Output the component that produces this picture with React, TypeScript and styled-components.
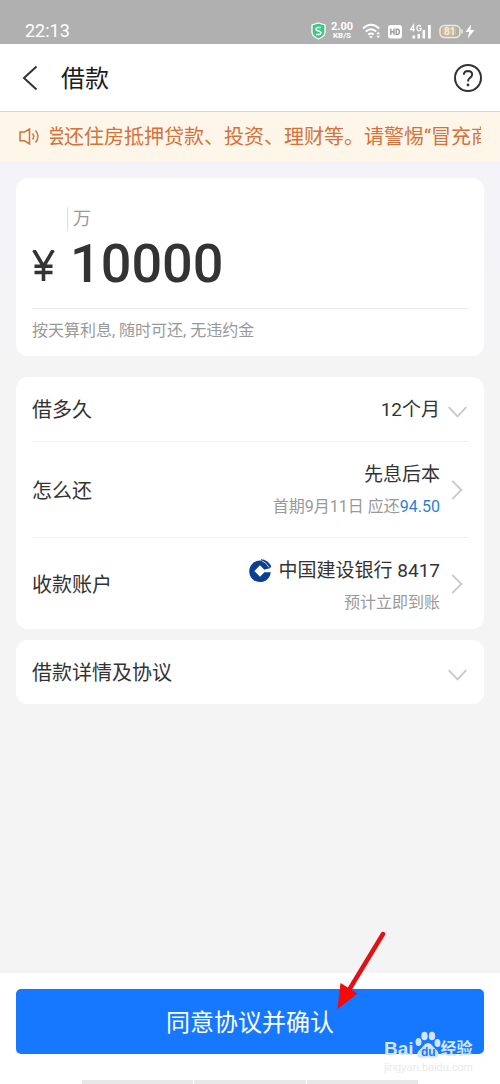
import React from "react";
import styled, { createGlobalStyle } from "styled-components";

const GlobalStyle = createGlobalStyle`
  *, *::before, *::after { box-sizing: border-box; }
  body {
    margin: 0;
    background: #f4f4f4;
    color: #333;
    font-family: Roboto, "Noto Sans CJK SC", sans-serif;
  }
  button { font: inherit; color: inherit; border: 0; background: none; padding: 0; cursor: pointer; }
  h1, p { margin: 0; font-weight: 400; }
  svg { display: block; flex: none; }
`;

const Page = styled.div`
  min-height: 100vh;
  display: flex;
  flex-direction: column;
  background: linear-gradient(#f3f3f9 160px, #f4f4f4 400px);
`;

const StatusBar = styled.div`
  height: 44px;
  padding: 18px 24px 0 25px;
  display: flex;
  justify-content: space-between;
  align-items: center;
  background: #b0b0b0;
  color: #fff;
`;

const Clock = styled.time`
  font-size: 18px;
  line-height: 26px;
`;

const StatusIcons = styled.div`
  display: flex;
  align-items: center;
`;

const NetSpeed = styled.div`
  width: 24px;
  margin: 0 8px 0 4px;
  display: flex;
  flex-direction: column;
  align-items: center;
  font-weight: 700;
  font-size: 11px;
  line-height: 10px;
`;

const NetUnit = styled.span`
  font-size: 8px;
  line-height: 8px;
`;

const Header = styled.header`
  height: 68px;
  padding: 0 17px 0 20px;
  display: flex;
  align-items: center;
  gap: 20px;
  background: #fff;
  border-bottom: 1px solid #d4d4d4;
`;

const Title = styled.h1`
  flex: 1;
  padding-top: 2px;
  font-size: 24px;
  line-height: 36px;
  color: #1c1c1c;
`;

const IconButton = styled.button`
  display: flex;
  color: #333;
`;

const Notice = styled.div`
  height: 49px;
  padding: 0 19px 0 18px;
  display: flex;
  align-items: center;
  gap: 8px;
  background: #fef7e9;
  color: #d4713c;
`;

const Marquee = styled.p<{ $scrolled: number }>`
  flex: 1;
  overflow: hidden;
  white-space: nowrap;
  text-indent: -${(p) => p.$scrolled}px;
  font-size: 20px;
  line-height: 32px;
`;

const Main = styled.main`
  flex: 1;
  padding: 17px 16px 24px;
`;

const Card = styled.section<{ $gap?: number }>`
  padding: 0 16px;
  margin-bottom: ${(p) => p.$gap ?? 0}px;
  background: #fff;
  border-radius: 12px;
`;

const UnitMark = styled.div`
  padding: 29px 0 0 35px;
  display: flex;
`;

const Unit = styled.span`
  padding-left: 5px;
  border-left: 1px solid #ddd;
  font-size: 18px;
  line-height: 24px;
  color: #999;
`;

const Amount = styled.div`
  height: 78px;
  padding-bottom: 8px;
  display: flex;
  align-items: center;
  gap: 15px;
  border-bottom: 1px solid #ebebeb;
`;

const AmountText = styled.span`
  padding-bottom: 4px;
  font-size: 54px;
  line-height: 64px;
  font-weight: 500;
`;

const Hint = styled.p`
  padding: 10px 0 13px;
  font-size: 16px;
  line-height: 24px;
  color: #999;
`;

const Row = styled.button<{ $height: number }>`
  width: 100%;
  min-height: ${(p) => p.$height}px;
  display: flex;
  align-items: center;
  text-align: right;

  & + & { border-top: 1px solid #f0f0f0; }
`;

const RowLabel = styled.span`
  flex: 1;
  padding-top: 2px;
  text-align: left;
  font-size: 20px;
  line-height: 30px;
`;

const RowValue = styled.span<{ $top?: number }>`
  padding-top: ${(p) => p.$top ?? 2}px;
  margin-right: 8px;
  display: flex;
  flex-direction: column;
  align-items: flex-end;
  gap: 4px;
`;

const Primary = styled.span`
  display: flex;
  align-items: center;
  gap: 7px;
  font-size: 19px;
  line-height: 28px;
`;

const Secondary = styled.span`
  font-size: 16px;
  line-height: 28px;
  color: #999;
`;

const Due = styled.span`
  color: #2e7fd0;
`;

const ChevronBox = styled.span<{ $down?: boolean }>`
  width: 20px;
  padding: ${(p) => (p.$down ? "6px 0 0" : "0 0 0 3px")};
`;

const Footer = styled.footer`
  position: relative;
  padding: 16px 16px 0;
  background: #fff;
`;

const Confirm = styled.button`
  display: block;
  width: 100%;
  height: 65px;
  padding-top: 2px;
  border-radius: 5px;
  background: #1677ff;
  color: #fff;
  font-size: 24px;
  line-height: 36px;
`;

const TabStrip = styled.div`
  width: 72%;
  margin: 26px auto 0;
  display: flex;
  gap: 1px;
`;

const TabEdge = styled.span`
  flex: 1;
  height: 4px;
  background: #e8e8e8;
`;

const Pointer = styled.svg`
  position: absolute;
  right: 112px;
  bottom: 72px;
  pointer-events: none;
`;

const Watermark = styled.div`
  position: absolute;
  right: 27px;
  bottom: 9px;
  width: 89px;
  pointer-events: none;
`;

const WatermarkLogo = styled.div`
  display: flex;
  align-items: flex-end;
  color: #d3e4ff;
  font-family: "Liberation Sans", "Noto Sans CJK SC", sans-serif;
  font-weight: 700;
  font-size: 19px;
  line-height: 20px;
`;

const WatermarkName = styled.span`
  font-size: 16px;
`;

const WatermarkUrl = styled.div`
  font-family: "Liberation Sans", sans-serif;
  font-size: 11px;
  line-height: 16px;
  color: #e9e9e9;
`;

function Chevron({ down }: { down?: boolean }) {
  return (
    <ChevronBox $down={down}>
      {down ? (
        <svg width="19" height="12" viewBox="0 0 19 12" fill="none" stroke="#c8c8c8" strokeWidth="1.8">
          <path d="M.7 1.2 9.5 10.4 18.3 1.2" />
        </svg>
      ) : (
        <svg width="12" height="20" viewBox="0 0 12 20" fill="none" stroke="#c8c8c8" strokeWidth="1.8">
          <path d="M1.2.8 10.4 10 1.2 19.2" />
        </svg>
      )}
    </ChevronBox>
  );
}

function BankLogo() {
  return (
    <svg width="23" height="24" viewBox="0 0 23 24">
      <circle cx="11" cy="12.300" r="10.800" fill="#0b3f8f" />
      <path d="M12 .2Q18.500 .6 22.300 7L21 9.500H12Z" fill="#0b3f8f" />
      <path d="M11 6.300 16.600 12 11 17.700 5.400 12Z" fill="#fff" />
      <path d="M15.500 10.400 20 9.600 23 8.500V13.200H15.500Z" fill="#fff" />
      <path d="M12.500 1.600Q17.200 3.400 20 8.400" fill="none" stroke="#fff" strokeWidth=".8" />
    </svg>
  );
}

function StatusGlyphs() {
  return (
    <svg width="114" height="20" viewBox="0 0 114 20" fill="none">
      <g stroke="#fff" strokeWidth="2">
        <path d="M.9 7.400Q9 0 17.200 7.400" />
        <path d="M3.700 10.600Q9 6 14.300 10.600" />
        <path d="M6.300 13.600Q9 11.400 11.700 13.600" />
      </g>
      <path fill="#fff" d="m9 17.500 2-2.300H7zM16.200 10.700l1.800 2.500h-3.600zM16.200 17.200l1.800-2.500h-3.600z" />
      <rect x="26" y="4" width="14" height="13.500" rx="2.500" fill="#fff" />
      <path stroke="#8c8c8c" strokeWidth="1.200" d="M28.800 7.500v6.600M32 7.500v6.600M28.800 10.800H32M34.200 8v5.500h1q2.200-.2 2.200-2.700T35.200 8z" />
      <g stroke="#fff" strokeWidth="1.200">
        <path d="M51.500 10.500V4L48.500 8.600h4.200M59 5.600Q57.800 4 56.200 4.500 54.700 5.300 54.900 7.500 55.200 10 57 10q1.700-.1 2-1.600V7.500H57.200" />
      </g>
      <path fill="#fff" d="M50.500 14.500h2.600V17.500h-2.600zM55.500 13h2.600v4.500h-2.600zM60.500 9h2.600v8.500h-2.600zM66 4h2.800v13.500H66z" />
      <rect x="78" y="4.500" width="20" height="12" rx="4.500" stroke="#f8e9cf" strokeWidth="1.500" />
      <rect x="80" y="6.500" width="14" height="8" rx="2" fill="#cdbda0" />
      <path fill="#f8e9cf" d="M99.200 8.500h1.600v4h-1.600z" />
      <text x="82" y="14" fontFamily="Roboto, sans-serif" fontSize="10" fontWeight="500" fill="#fff4df">81</text>
      <path fill="#fff" d="M109 3.500 103.500 11h3.700l-1.500 6.500L112.500 9h-4z" />
    </svg>
  );
}

export default function App() {
  return (
    <>
      <GlobalStyle />
      <Page>
        <StatusBar>
          <Clock>22:13</Clock>
          <StatusIcons>
            <svg width="15" height="18" viewBox="0 0 15 18">
              <path d="M7.500 1 14 3v7.500Q13.500 14.500 7.500 17 1.500 14.500 1 10.500V3Z" fill="#38c983" stroke="#fff" strokeWidth="1.300" />
              <path d="M10 5.600H6.200Q4.800 6 5 7.500 5.300 8.600 7.500 8.900 10 9.300 10 10.800 9.800 12.400 8 12.400H5" fill="none" stroke="#fff" strokeWidth="1.500" />
            </svg>
            <NetSpeed>
              2.00
              <NetUnit>KB/S</NetUnit>
            </NetSpeed>
            <StatusGlyphs />
          </StatusIcons>
        </StatusBar>

        <Header>
          <IconButton aria-label="返回">
            <svg width="21" height="26" viewBox="0 0 21 26" fill="none" stroke="#333" strokeWidth="2">
              <path d="M16.500 1.500 4 13 16.500 24.500" />
            </svg>
          </IconButton>
          <Title>借款</Title>
          <IconButton aria-label="帮助">
            <svg width="30" height="30" viewBox="0 0 30 30" fill="none" stroke="#333" strokeWidth="2">
              <circle cx="15" cy="15" r="13" />
              <path d="M10.800 11.800Q10.900 7.900 15 7.900 19.200 8 19.200 11.500 19.100 13.400 17 14.800 15 16.200 15 18.600" />
              <circle cx="15" cy="22" r="1.400" fill="#333" stroke="none" />
            </svg>
          </IconButton>
        </Header>

        <Notice>
          <svg width="24" height="20" viewBox="0 0 24 20" fill="none" stroke="#d4713c" strokeWidth="1.500">
            <path d="M2 5H6.500L11.500 2V17L6.500 13.800H2ZM14.500 6.500Q17 9.500 14.500 12.500M17.500 3.500Q22.500 9.500 17.500 15.500" />
          </svg>
          <Marquee $scrolled={6}>偿还住房抵押贷款、投资、理财等。请警惕“冒充商</Marquee>
        </Notice>

        <Main>
          <Card $gap={21}>
            <UnitMark>
              <Unit>万</Unit>
            </UnitMark>
            <Amount>
              <svg width="23" height="31" viewBox="0 0 23 31" fill="none" stroke="#333" strokeWidth="3.600">
                <path d="M1.800 0 11.500 16.500 21.200 0M11.500 15.500V31M2.500 16.200H20.500M2.500 22.500H20.500" />
              </svg>
              <AmountText>10000</AmountText>
            </Amount>
            <Hint>按天算利息, 随时可还, 无违约金</Hint>
          </Card>

          <Card $gap={11}>
            <Row $height={64}>
              <RowLabel>借多久</RowLabel>
              <RowValue>
                <Primary>12个月</Primary>
              </RowValue>
              <Chevron down />
            </Row>
            <Row $height={96}>
              <RowLabel>怎么还</RowLabel>
              <RowValue>
                <Primary>先息后本</Primary>
                <Secondary>
                  首期9月11日 应还<Due>94.50</Due>
                </Secondary>
              </RowValue>
              <Chevron />
            </Row>
            <Row $height={92}>
              <RowLabel>收款账户</RowLabel>
              <RowValue $top={6}>
                <Primary>
                  <BankLogo />
                  中国建设银行 8417
                </Primary>
                <Secondary>预计立即到账</Secondary>
              </RowValue>
              <Chevron />
            </Row>
          </Card>

          <Card>
            <Row $height={64} aria-expanded={false}>
              <RowLabel>借款详情及协议</RowLabel>
              <Chevron down />
            </Row>
          </Card>
        </Main>

        <Footer>
          <Confirm>同意协议并确认</Confirm>
          <TabStrip>
            <TabEdge />
            <TabEdge />
            <TabEdge />
          </TabStrip>
          <Pointer width="52" height="82" viewBox="0 0 52 82">
            <path d="M47 4 13 60" stroke="#e01216" strokeWidth="4.500" strokeLinecap="round" />
            <path d="M1.500 79 4.500 53 21.500 63.500Z" fill="#f80808" />
          </Pointer>
          <Watermark>
            <WatermarkLogo>
              Bai
              <svg width="27" height="28" viewBox="0 0 27 28" fill="#d3e4ff">
                <ellipse cx="4.500" cy="11" rx="3" ry="4" />
                <ellipse cx="10.500" cy="5" rx="3.200" ry="4.300" />
                <ellipse cx="18" cy="5" rx="3.200" ry="4.300" />
                <ellipse cx="23.500" cy="12" rx="3" ry="4" />
                <path d="M14 12Q17 12 19 15.500L23.500 20Q26 24 22.500 26.500 20 27.500 14 26.600 8 27.500 5 26.500 1.500 24 4.500 20L9 15.500Q11 12 14 12Z" />
                <text x="7" y="24.500" fontSize="12" fill="#1677ff">du</text>
              </svg>
              <WatermarkName>经验</WatermarkName>
            </WatermarkLogo>
            <WatermarkUrl>jingyan.baidu.com</WatermarkUrl>
          </Watermark>
        </Footer>
      </Page>
    </>
  );
}
